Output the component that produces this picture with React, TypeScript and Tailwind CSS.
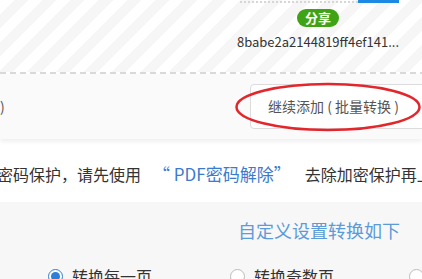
import React from "react";

const font = { fontFamily: '"Microsoft YaHei", "Noto Sans CJK SC", sans-serif' };

function Radio({ checked, label }: { checked?: boolean; label: string }) {
    return (
        <label className="flex items-center gap-[9px] whitespace-nowrap">
            <span className={`flex items-center justify-center w-[15px] h-[15px] rounded-full border bg-white ${checked ? "border-[#2d7ed8]" : "border-[#bbbbbb]"}`}>
                {checked && <span className="w-[9px] h-[9px] rounded-full bg-[#2d7ed8]" />}
            </span>
            <span className="text-[16px] leading-[24px] text-[#333]">{label}</span>
        </label>
    );
}

export default function App() {
    return (
        <div className="w-[422px] h-[279px] overflow-hidden bg-white relative" style={font}>
            {/* file card area */}
            <div className="h-[72px] bg-[repeating-linear-gradient(135deg,#ffffff_0px,#ffffff_10px,#f6f6f6_10px,#f6f6f6_20px)]">
                <div className="flex ml-[240px]">
                    <div className="w-[118px] h-[3px] border-b-2 border-dotted border-[#d6d6d6]" />
                    <div className="w-[41px] h-[3px] bg-[#1e88e5]" />
                </div>
                <div className="flex flex-col items-center w-[160px] ml-[238px] mt-[6px]">
                    <span className="h-[18px] px-[8px] rounded-full bg-[#40a316] text-white text-[13px] leading-[18px] font-bold">分享</span>
                    <span className="text-[13px] leading-[18px] text-[#333] mt-[6px]">8babe2a2144819ff4ef141...</span>
                </div>
            </div>
            <div className="h-[2px] bg-[repeating-linear-gradient(90deg,#d9d9d9_0px,#d9d9d9_6px,transparent_6px,transparent_10px)]" />

            {/* toolbar */}
            <div className="relative h-[65px] bg-[#fafafa] shadow-[0_3px_4px_rgba(0,0,0,0.06)] flex items-center justify-between">
                <span className="text-[14px] text-[#555] ml-[0px]">)</span>
                <button className="h-[45px] w-[190px] -mr-[18px] border border-[#dcdcdc] rounded-[4px] bg-white text-[14px] text-[#555] text-left pl-[17px] whitespace-pre">
                    {"继续添加 ( 批量转换 )"}
                </button>
                <svg className="absolute left-[234px] top-[7px]" width="188" height="52" viewBox="0 0 188 52">
                    <ellipse cx="94" cy="26" rx="91.5" ry="23" fill="none" stroke="#e3262c" strokeWidth="2.5" />
                </svg>
            </div>

            {/* notice */}
            <div className="h-[63px] flex items-center whitespace-nowrap text-[16px] ml-[-3px] pt-[7px]">
                <span className="text-[#333]">密码保护，请先使用</span>
                <span className="text-[#3a7bd0] ml-[12px] text-[17px]">“ PDF密码解除”</span>
                <span className="text-[#333] ml-[14px]">去除加密保护再上传</span>
            </div>

            {/* settings */}
            <div className="bg-[#f7f7f7] h-[77px]">
                <div className="text-right pr-[22px] pt-[16px] text-[18px] leading-[24px] text-[#5b9bd9]">自定义设置转换如下</div>
                <div className="flex mt-[22px] ml-[48px]">
                    <div className="w-[182px] shrink-0"><Radio checked label="转换每一页" /></div>
                    <div className="w-[179px] shrink-0"><Radio label="转换奇数页" /></div>
                    <div className="shrink-0"><Radio label="转换偶数页" /></div>
                </div>
            </div>
        </div>
    );
}
